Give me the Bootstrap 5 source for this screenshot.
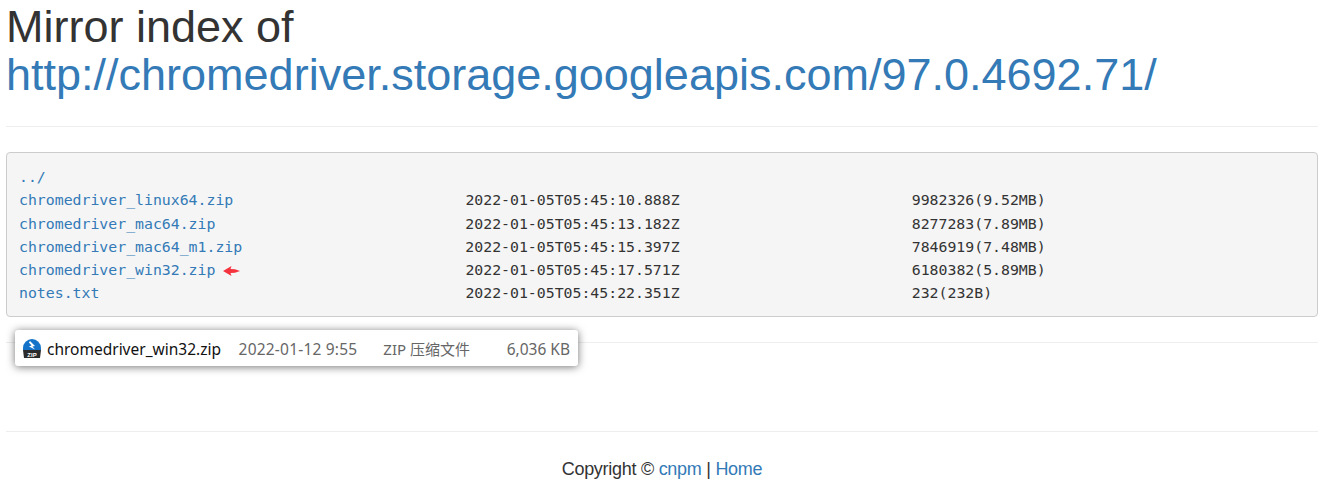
<!DOCTYPE html>
<html lang="en">
<head>
    <meta charset="UTF-8">
    <title>Mirror index of chromedriver</title>
    <link href="https://cdn.jsdelivr.net/npm/bootstrap@5.3.0/dist/css/bootstrap.min.css" rel="stylesheet">
    <style>
        html, body { height: 484px; overflow: hidden; }
        body { background: #fff; color: #333; font-family: "Liberation Sans", Arial, sans-serif; font-size: 14px; }
        a { color: #337ab7; text-decoration: none; }
        .page-wrap { padding: 0 6px; position: relative; }
        .mirror-title { font-family: "Liberation Sans", Arial, sans-serif; font-size: 45px; line-height: 48px; font-weight: 400; color: #333; margin: 3px 0 0; }
        .rule-line { border: 0; border-top: 1px solid #eee; opacity: 1; margin: 0; }
        .rule-a { margin-top: 27px; }
        .file-list { margin: 25px 0 0; padding: 12px 12px 12px; height: 165px; background: #f5f5f5; border: 1px solid #ccc; border-radius: 4px; font-family: "DejaVu Sans Mono", monospace; font-size: 14.83px; line-height: 23.25px; color: #333; overflow: hidden; }
        .file-list a { color: #337ab7; }
        .red-arrow { width: 17px; height: 10px; vertical-align: -1px; margin-left: -1px; margin-right: -16px; }
        .rule-b { margin-top: 25px; }
        .rule-c { margin-top: 88px; }
        .copy-foot { text-align: center; margin-top: 25px; font-size: 18px; line-height: 24px; letter-spacing: -.28px; }
        .file-popup { position: absolute; left: 15px; top: 330px; width: 563px; height: 36px; background: #fff; border-radius: 3px; box-shadow: 0 1px 8px rgba(0,0,0,.55); font-family: "Noto Sans", "Noto Sans CJK SC", sans-serif; font-size: 15px; color: #666; padding: 0 8px 0 7px; }
        .file-popup span { padding-top: 3px; }
        .file-popup .pop-name { color: #111; font-size: 15.5px; margin-left: 5px; width: 192px; }
        .pop-date { width: 145px; font-size: 15.5px; letter-spacing: .2px; }
        .pop-type { width: 123px; }
        .pop-size { width: 64px; text-align: right; font-size: 15.5px; }
    </style>
</head>
<body>
    <div class="page-wrap">
        <h1 class="mirror-title">Mirror index of<br><a href="#">http://chromedriver.storage.googleapis.com/97.0.4692.71/</a></h1>
        <hr class="rule-line rule-a">
        <pre class="file-list"><a href="#">../</a>
<a href="#">chromedriver_linux64.zip</a>                          2022-01-05T05:45:10.888Z                          9982326(9.52MB)
<a href="#">chromedriver_mac64.zip</a>                            2022-01-05T05:45:13.182Z                          8277283(7.89MB)
<a href="#">chromedriver_mac64_m1.zip</a>                         2022-01-05T05:45:15.397Z                          7846919(7.48MB)
<a href="#">chromedriver_win32.zip</a> <svg class="red-arrow" viewBox="0 0 17 10"><path d="M0 5 8.5 0 7.5 3 12 3.2 17 5 12 6.8 7.5 7 8.5 10Z" fill="#f5333f"/></svg>                           2022-01-05T05:45:17.571Z                          6180382(5.89MB)
<a href="#">notes.txt</a>                                         2022-01-05T05:45:22.351Z                          232(232B)</pre>
        <hr class="rule-line rule-b">
        <hr class="rule-line rule-c">
        <div class="copy-foot">Copyright © <a href="#">cnpm</a> | <a href="#">Home</a></div>
    </div>
    <div class="file-popup d-flex align-items-center">
        <svg width="20" height="20" viewBox="0 0 20 20">
            <path d="M1 12V10a9 9 0 0 1 18 0v2Z" fill="#1473c9"/>
            <path d="M8 3 13 8 10.5 8.5 13 11.5 7 8.5 9.5 7.5 7 4.5Z" fill="#fff"/>
            <path d="M1 12H19L18 20H2Z" fill="#2b2b2b"/>
            <text x="10" y="18.6" font-size="6" font-weight="700" fill="#fff" text-anchor="middle" font-family="Liberation Sans">ZIP</text>
        </svg>
        <span class="pop-name">chromedriver_win32.zip</span>
        <span class="pop-date">2022-01-12 9:55</span>
        <span class="pop-type">ZIP 压缩文件</span>
        <span class="pop-size">6,036 KB</span>
    </div>
    <script src="https://cdn.jsdelivr.net/npm/bootstrap@5.3.0/dist/js/bootstrap.bundle.min.js"></script>
</body>
</html>
